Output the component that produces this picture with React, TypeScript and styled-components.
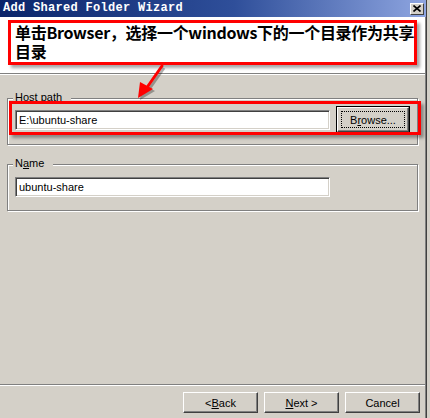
import React from "react";
import styled, { createGlobalStyle, css } from "styled-components";

const GlobalStyle = createGlobalStyle`
  html, body { margin: 0; padding: 0; background: #d4d0c8; }
  body { font-family: "Liberation Sans", Arial, sans-serif; }
`;

const Window = styled.div`
  position: relative;
  width: 430px;
  height: 418px;
  display: grid;
  grid-template-columns: 426px 4px;
  background: #d4d0c8;
  overflow: hidden;
`;

const Main = styled.div`
  display: flex;
  flex-direction: column;
  height: 418px;
  border-right: 1px solid #808080;
  box-sizing: border-box;
`;

const RightFrame = styled.div`
  background: #d4d0c8;
  border-left: 1px solid #404040;
`;

const TitleBar = styled.div`
  height: 17px;
  display: flex;
  align-items: center;
  padding: 0 2px 0 3px;
  background: linear-gradient(to right, #0a246a 0%, #2f4f9a 55%, #8ea5e0 100%);
  margin-right: -1px;
`;

const TitleText = styled.span`
  font-family: "Liberation Mono", "Courier New", monospace;
  font-weight: bold;
  font-size: 12px;
  letter-spacing: 0.3px;
  color: #ffffff;
  line-height: 17px;
  white-space: nowrap;
`;

const CloseButton = styled.div`
  margin-left: auto;
  width: 14px;
  height: 12px;
  box-sizing: border-box;
  background: #d4d0c8;
  border-top: 1px solid #ffffff;
  border-left: 1px solid #ffffff;
  border-right: 1px solid #404040;
  border-bottom: 1px solid #404040;
  display: flex;
  align-items: center;
  justify-content: center;
`;

const Header = styled.div`
  height: 53px;
  background: #ffffff;
  border-bottom: 1px solid #808080;
  box-shadow: 0 1px 0 #ffffff;
  margin-bottom: 1px;
  padding: 3px 8px 0 8px;
  box-sizing: content-box;
`;

const Callout = styled.div`
  height: 45px;
  box-sizing: border-box;
  border: 3px solid #ff0000;
  background: #ffffff;
  box-shadow: 3px 3px 3px rgba(0, 0, 0, 0.35);
  padding: 0 0 0 4px;
  font-family: "Noto Sans CJK SC", "Liberation Sans", sans-serif;
  font-weight: bold;
  font-size: 16px;
  line-height: 19px;
  color: #000000;
`;

const CalloutLine = styled.div`
  white-space: nowrap;
  letter-spacing: -0.3px;
`;

const Body = styled.div`
  flex: 1;
  display: flex;
  flex-direction: column;
`;

const Content = styled.div`
  flex: 1;
  padding: 0 7px;
  display: flex;
  flex-direction: column;
`;

const GroupBox = styled.div<{ $top: number; $pad: number }>`
  position: relative;
  margin-top: ${(p) => p.$top}px;
  height: 47px;
  box-sizing: border-box;
  border: 1px solid #808080;
  box-shadow: inset 1px 1px 0 #ffffff, 1px 1px 0 #ffffff;
  padding: ${(p) => p.$pad}px 0 0 7px;
`;

const Legend = styled.span`
  position: absolute;
  top: -8px;
  left: 5px;
  padding: 0 9px 0 2px;
  background: #d4d0c8;
  font-size: 11px;
  line-height: 13px;
  color: #000000;
`;

const Row = styled.div`
  display: flex;
  align-items: center;
  gap: 7px;
`;

const TextInput = styled.div`
  width: 315px;
  height: 20px;
  box-sizing: border-box;
  background: #ffffff;
  border-top: 1px solid #808080;
  border-left: 1px solid #808080;
  border-right: 1px solid #ffffff;
  border-bottom: 1px solid #ffffff;
  box-shadow: inset 1px 1px 0 #404040, inset -1px -1px 0 #d4d0c8;
  padding: 0 0 0 3px;
  font-size: 11px;
  line-height: 18px;
  color: #000000;
  white-space: nowrap;
`;

const Button = styled.div<{ $default?: boolean }>`
  position: relative;
  width: 75px;
  height: 21px;
  box-sizing: border-box;
  background: #d4d0c8;
  border-top: 1px solid #ffffff;
  border-left: 1px solid #ffffff;
  border-right: 1px solid #404040;
  border-bottom: 1px solid #404040;
  box-shadow: inset -1px -1px 0 #808080;
  display: flex;
  align-items: center;
  justify-content: center;
  font-size: 11px;
  color: #000000;
  white-space: nowrap;
  ${(p) =>
    p.$default &&
    css`
      width: 72px;
      height: 25px;
      outline: 1px solid #000000;
      outline-offset: 0;
      &::after {
        content: "";
        position: absolute;
        inset: 3px;
        border: 1px dotted #000000;
      }
    `}
`;

const Separator = styled.div`
  height: 2px;
  border-top: 1px solid #808080;
  border-bottom: 1px solid #ffffff;
  box-sizing: border-box;
`;

const Footer = styled.div`
  height: 32px;
  display: flex;
  justify-content: flex-end;
  gap: 6px;
  padding: 6px 5px 0 0;
  box-sizing: border-box;
`;

const HighlightBox = styled.div`
  position: absolute;
  left: 9px;
  top: 101px;
  width: 412px;
  height: 34px;
  box-sizing: border-box;
  border: 3px solid #ff0000;
  box-shadow: 3px 3px 3px rgba(0, 0, 0, 0.35);
  pointer-events: none;
`;

const ArrowSvg = styled.svg`
  position: absolute;
  left: 128px;
  top: 58px;
`;

export default function App() {
  return (
    <>
      <GlobalStyle />
      <Window>
        <Main>
          <TitleBar>
            <TitleText>Add Shared Folder Wizard</TitleText>
            <CloseButton>
              <svg width="8" height="7" viewBox="0 0 8 7">
                <path d="M0.5 0.5 L7.5 6.5 M7.5 0.5 L0.5 6.5" stroke="#000" strokeWidth="1.6" />
              </svg>
            </CloseButton>
          </TitleBar>
          <Header>
            <Callout>
              <CalloutLine>单击Browser，选择一个windows下的一个目录作为共享</CalloutLine>
              <CalloutLine>目录</CalloutLine>
            </Callout>
          </Header>
          <Body>
            <Content>
              <GroupBox $top={23} $pad={8}>
                <Legend>Host path</Legend>
                <Row>
                  <TextInput>E:\ubuntu-share</TextInput>
                  <Button $default>
                    B<u>r</u>owse...
                  </Button>
                </Row>
              </GroupBox>
              <GroupBox $top={19} $pad={12}>
                <Legend>
                  N<u>a</u>me
                </Legend>
                <Row>
                  <TextInput>ubuntu-share</TextInput>
                </Row>
              </GroupBox>
            </Content>
            <Separator />
            <Footer>
              <Button>
                &lt; <u>B</u>ack
              </Button>
              <Button>
                <u>N</u>ext &gt;
              </Button>
              <Button>Cancel</Button>
            </Footer>
          </Body>
        </Main>
        <RightFrame />
        <HighlightBox />
        <ArrowSvg width="45" height="48" viewBox="0 0 45 48">
          <g transform="translate(2,2)" fill="rgba(0,0,0,0.3)" stroke="rgba(0,0,0,0.3)">
            <line x1="34" y1="8" x2="20" y2="28" strokeWidth="3" />
            <polygon points="10,40 12,24 25,31" stroke="none" />
          </g>
          <line x1="34" y1="8" x2="20" y2="28" stroke="#ff0000" strokeWidth="3" strokeLinecap="round" />
          <polygon points="10,40 12,24 25,31" fill="#ff0000" />
        </ArrowSvg>
      </Window>
    </>
  );
}
